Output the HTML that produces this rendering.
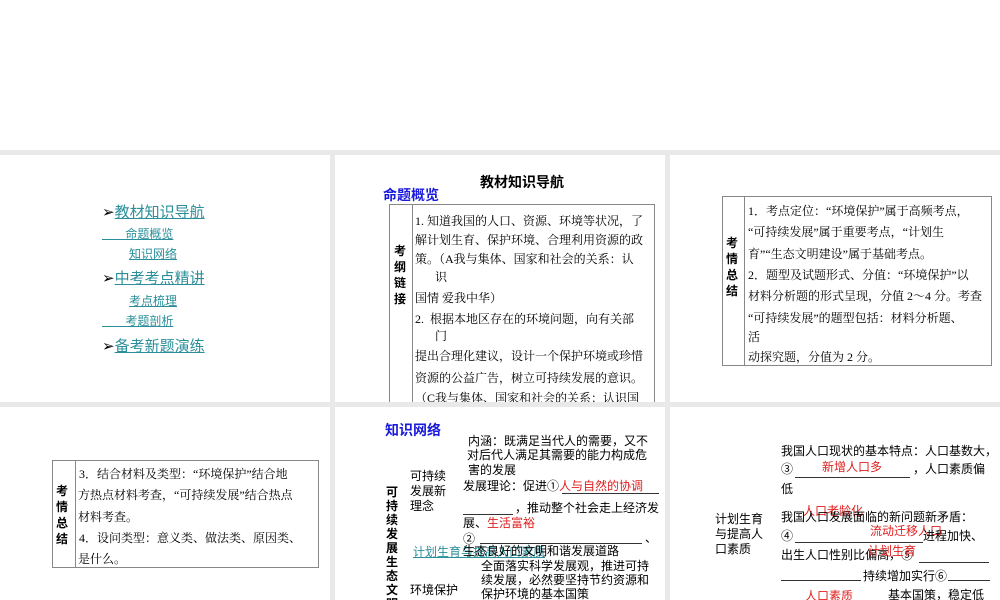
<!DOCTYPE html>
<html><head><meta charset="utf-8"><style>
*{margin:0;padding:0;box-sizing:border-box}
body{width:1000px;height:600px;background:#fff;position:relative;overflow:hidden;font-family:"Liberation Sans","Noto Sans CJK SC",sans-serif;color:#000}
.bg{position:absolute;left:0;top:150px;width:1000px;height:450px;background:#e9e9e9}
.p{position:absolute;background:#fff;overflow:hidden}
.t{position:absolute;white-space:nowrap;font-size:12px;line-height:14px}
.serif{font-family:"Liberation Serif","Noto Serif CJK SC",serif}
.lk{color:#2a8f9a;text-decoration:underline}
.box{position:absolute;border:1px solid #888}
.vl{position:absolute;top:0;bottom:0;width:1px;background:#888}
.red{color:#e02020}
.b{font-weight:bold}
.ul{position:absolute;height:1px;background:#333}
</style></head><body>
<div class="bg"></div>

<!-- panel 1 -->
<div class="p" style="left:0;top:155px;width:330px;height:247px">
 <div class="t" style="left:102px;top:49px;font-size:15px;line-height:18px">➢<span class="lk">教材知识导航</span></div>
 <div class="t lk" style="left:102px;top:72px">&nbsp;&nbsp;&nbsp;&nbsp;&nbsp;&nbsp;&nbsp;命题概览</div>
 <div class="t lk" style="left:129px;top:92px">知识网络</div>
 <div class="t" style="left:102px;top:115px;font-size:15px;line-height:18px">➢<span class="lk">中考考点精讲</span></div>
 <div class="t lk" style="left:129px;top:139px">考点梳理</div>
 <div class="t lk" style="left:102px;top:159px">&nbsp;&nbsp;&nbsp;&nbsp;&nbsp;&nbsp;&nbsp;考题剖析</div>
 <div class="t" style="left:102px;top:183px;font-size:15px;line-height:18px">➢<span class="lk">备考新题演练</span></div>
</div>

<!-- panel 2 -->
<div class="p" style="left:335px;top:155px;width:330px;height:247px">
 <div class="t b" style="left:145px;top:19px;font-size:14px;line-height:16px">教材知识导航</div>
 <div class="t b" style="left:48px;top:32px;font-size:14px;line-height:16px;color:#1a1adc">命题概览</div>
 <div class="box" style="left:54px;top:49px;width:266px;height:220px"><div class="vl" style="left:22px"></div></div>
 <div class="t b" style="left:59px;top:88px;width:12px;white-space:normal;font-size:12px;line-height:16px">考纲链接</div>
 <div class="t serif" style="left:80px;top:59px">1. 知道我国的人口、资源、环境等状况，了</div>
 <div class="t serif" style="left:80px;top:78px">解计划生育、保护环境、合理利用资源的政</div>
 <div class="t serif" style="left:80px;top:97px">策。（A我与集体、国家和社会的关系：认</div>
 <div class="t serif" style="left:100px;top:115px">识</div>
 <div class="t serif" style="left:80px;top:136px">国情 爱我中华）</div>
 <div class="t serif" style="left:80px;top:157px">2.&nbsp; 根据本地区存在的环境问题，向有关部</div>
 <div class="t serif" style="left:100px;top:174px">门</div>
 <div class="t serif" style="left:80px;top:194px">提出合理化建议，设计一个保护环境或珍惜</div>
 <div class="t serif" style="left:80px;top:216px">资源的公益广告，树立可持续发展的意识。</div>
 <div class="t serif" style="left:80px;top:236px">（C我与集体、国家和社会的关系：认识国</div>
</div>

<!-- panel 3 -->
<div class="p" style="left:670px;top:155px;width:330px;height:247px">
 <div class="box" style="left:52px;top:41px;width:270px;height:170px"><div class="vl" style="left:21px"></div></div>
 <div class="t b" style="left:56px;top:80px;width:12px;white-space:normal;line-height:16px">考情总结</div>
 <div class="t serif" style="left:78px;top:49px">1．考点定位：“环境保护”属于高频考点，</div>
 <div class="t serif" style="left:78px;top:70px">“可持续发展”属于重要考点，“计划生</div>
 <div class="t serif" style="left:78px;top:92px">育”“生态文明建设”属于基础考点。</div>
 <div class="t serif" style="left:78px;top:113px">2．题型及试题形式、分值：“环境保护”以</div>
 <div class="t serif" style="left:78px;top:134px">材料分析题的形式呈现，分值 2～4 分。考查</div>
 <div class="t serif" style="left:78px;top:156px">“可持续发展”的题型包括：材料分析题、</div>
 <div class="t serif" style="left:78px;top:175px">活</div>
 <div class="t serif" style="left:78px;top:195px">动探究题，分值为 2 分。</div>
</div>

<!-- panel 4 -->
<div class="p" style="left:0;top:407px;width:330px;height:193px">
 <div class="box" style="left:52px;top:53px;width:267px;height:108px"><div class="vl" style="left:22px"></div></div>
 <div class="t b" style="left:56px;top:76px;width:12px;white-space:normal;line-height:16px">考情总结</div>
 <div class="t serif" style="left:79px;top:60px">3．结合材料及类型：“环境保护”结合地</div>
 <div class="t serif" style="left:78px;top:81px">方热点材料考查，“可持续发展”结合热点</div>
 <div class="t serif" style="left:78px;top:103px">材料考查。</div>
 <div class="t serif" style="left:79px;top:124px">4．设问类型：意义类、做法类、原因类、</div>
 <div class="t serif" style="left:78px;top:145px">是什么。</div>
</div>

<!-- panel 5 -->
<div class="p" style="left:335px;top:407px;width:330px;height:193px">
 <div class="t b" style="left:50px;top:15px;font-size:14px;line-height:16px;color:#1a1adc">知识网络</div>
 <div class="t" style="left:133px;top:27px">内涵：既满足当代人的需要，又不</div>
 <div class="t" style="left:132px;top:41px">对后代人满足其需要的能力构成危</div>
 <div class="t" style="left:133px;top:56px">害的发展</div>
 <div class="t" style="left:75px;top:62px;white-space:normal;width:40px;line-height:15px">可持续发展新理念</div>
 <div class="t" style="left:128px;top:72px">发展理论：促进①<span class="red">人与自然的协调</span></div>
 <div class="ul" style="left:227px;top:86px;width:97px"></div>
 <div class="ul" style="left:128px;top:107px;width:50px"></div>
 <div class="t" style="left:180px;top:94px">，推动整个社会走上经济发</div>
 <div class="t" style="left:128px;top:109px">展、<span class="red">生活富裕</span></div>
 <div class="t" style="left:128px;top:125px">②</div>
 <div class="ul" style="left:145px;top:136px;width:162px"></div>
 <div class="t" style="left:310px;top:124px">、</div>
 <div class="t lk" style="left:78px;top:138px">计划生育与提高人口素质</div>
 <div class="t" style="left:128px;top:137px">生态良好的文明和谐发展道路</div>
 <div class="t b" style="left:51px;top:78px;width:12px;white-space:normal;line-height:14px">可持续发展　生态文明</div>
 <div class="t" style="left:146px;top:152px">全面落实科学发展观，推进可持</div>
 <div class="t" style="left:146px;top:166px">续发展，必然要坚持节约资源和</div>
 <div class="t" style="left:146px;top:180px">保护环境的基本国策</div>
 <div class="t" style="left:75px;top:176px">环境保护</div>
</div>

<!-- panel 6 -->
<div class="p" style="left:670px;top:407px;width:330px;height:193px">
 <div class="t" style="left:111px;top:37px">我国人口现状的基本特点：人口基数大，</div>
 <div class="t" style="left:111px;top:55px">③</div>
 <div class="t red" style="left:152px;top:53px">新增人口多</div>
 <div class="ul" style="left:125px;top:70px;width:115px"></div>
 <div class="t" style="left:243px;top:55px">，人口素质偏</div>
 <div class="t" style="left:111px;top:75px">低</div>
 <div class="t" style="left:45px;top:105px;white-space:normal;width:50px;line-height:15px">计划生育与提高人口素质</div>
 <div class="t red" style="left:133px;top:97px">人口老龄化</div>
 <div class="t" style="left:111px;top:103px">我国人口发展面临的新问题新矛盾：</div>
 <div class="t" style="left:111px;top:122px">④</div>
 <div class="t red" style="left:200px;top:117px">流动迁移人口</div>
 <div class="ul" style="left:125px;top:135px;width:128px"></div>
 <div class="t" style="left:253px;top:122px">进程加快、</div>
 <div class="t" style="left:111px;top:141px">出生人口性别比偏高，⑤</div>
 <div class="t red" style="left:198px;top:137px">计划生育</div>
 <div class="ul" style="left:249px;top:155px;width:70px"></div>
 <div class="ul" style="left:111px;top:173px;width:80px"></div>
 <div class="t" style="left:193px;top:162px">持续增加实行⑥</div>
 <div class="ul" style="left:278px;top:173px;width:42px"></div>
 <div class="t red" style="left:135px;top:182px">人口素质</div>
 <div class="ul" style="left:111px;top:193px;width:105px"></div>
 <div class="t" style="left:218px;top:181px">基本国策，稳定低</div>
</div>
</body></html>
